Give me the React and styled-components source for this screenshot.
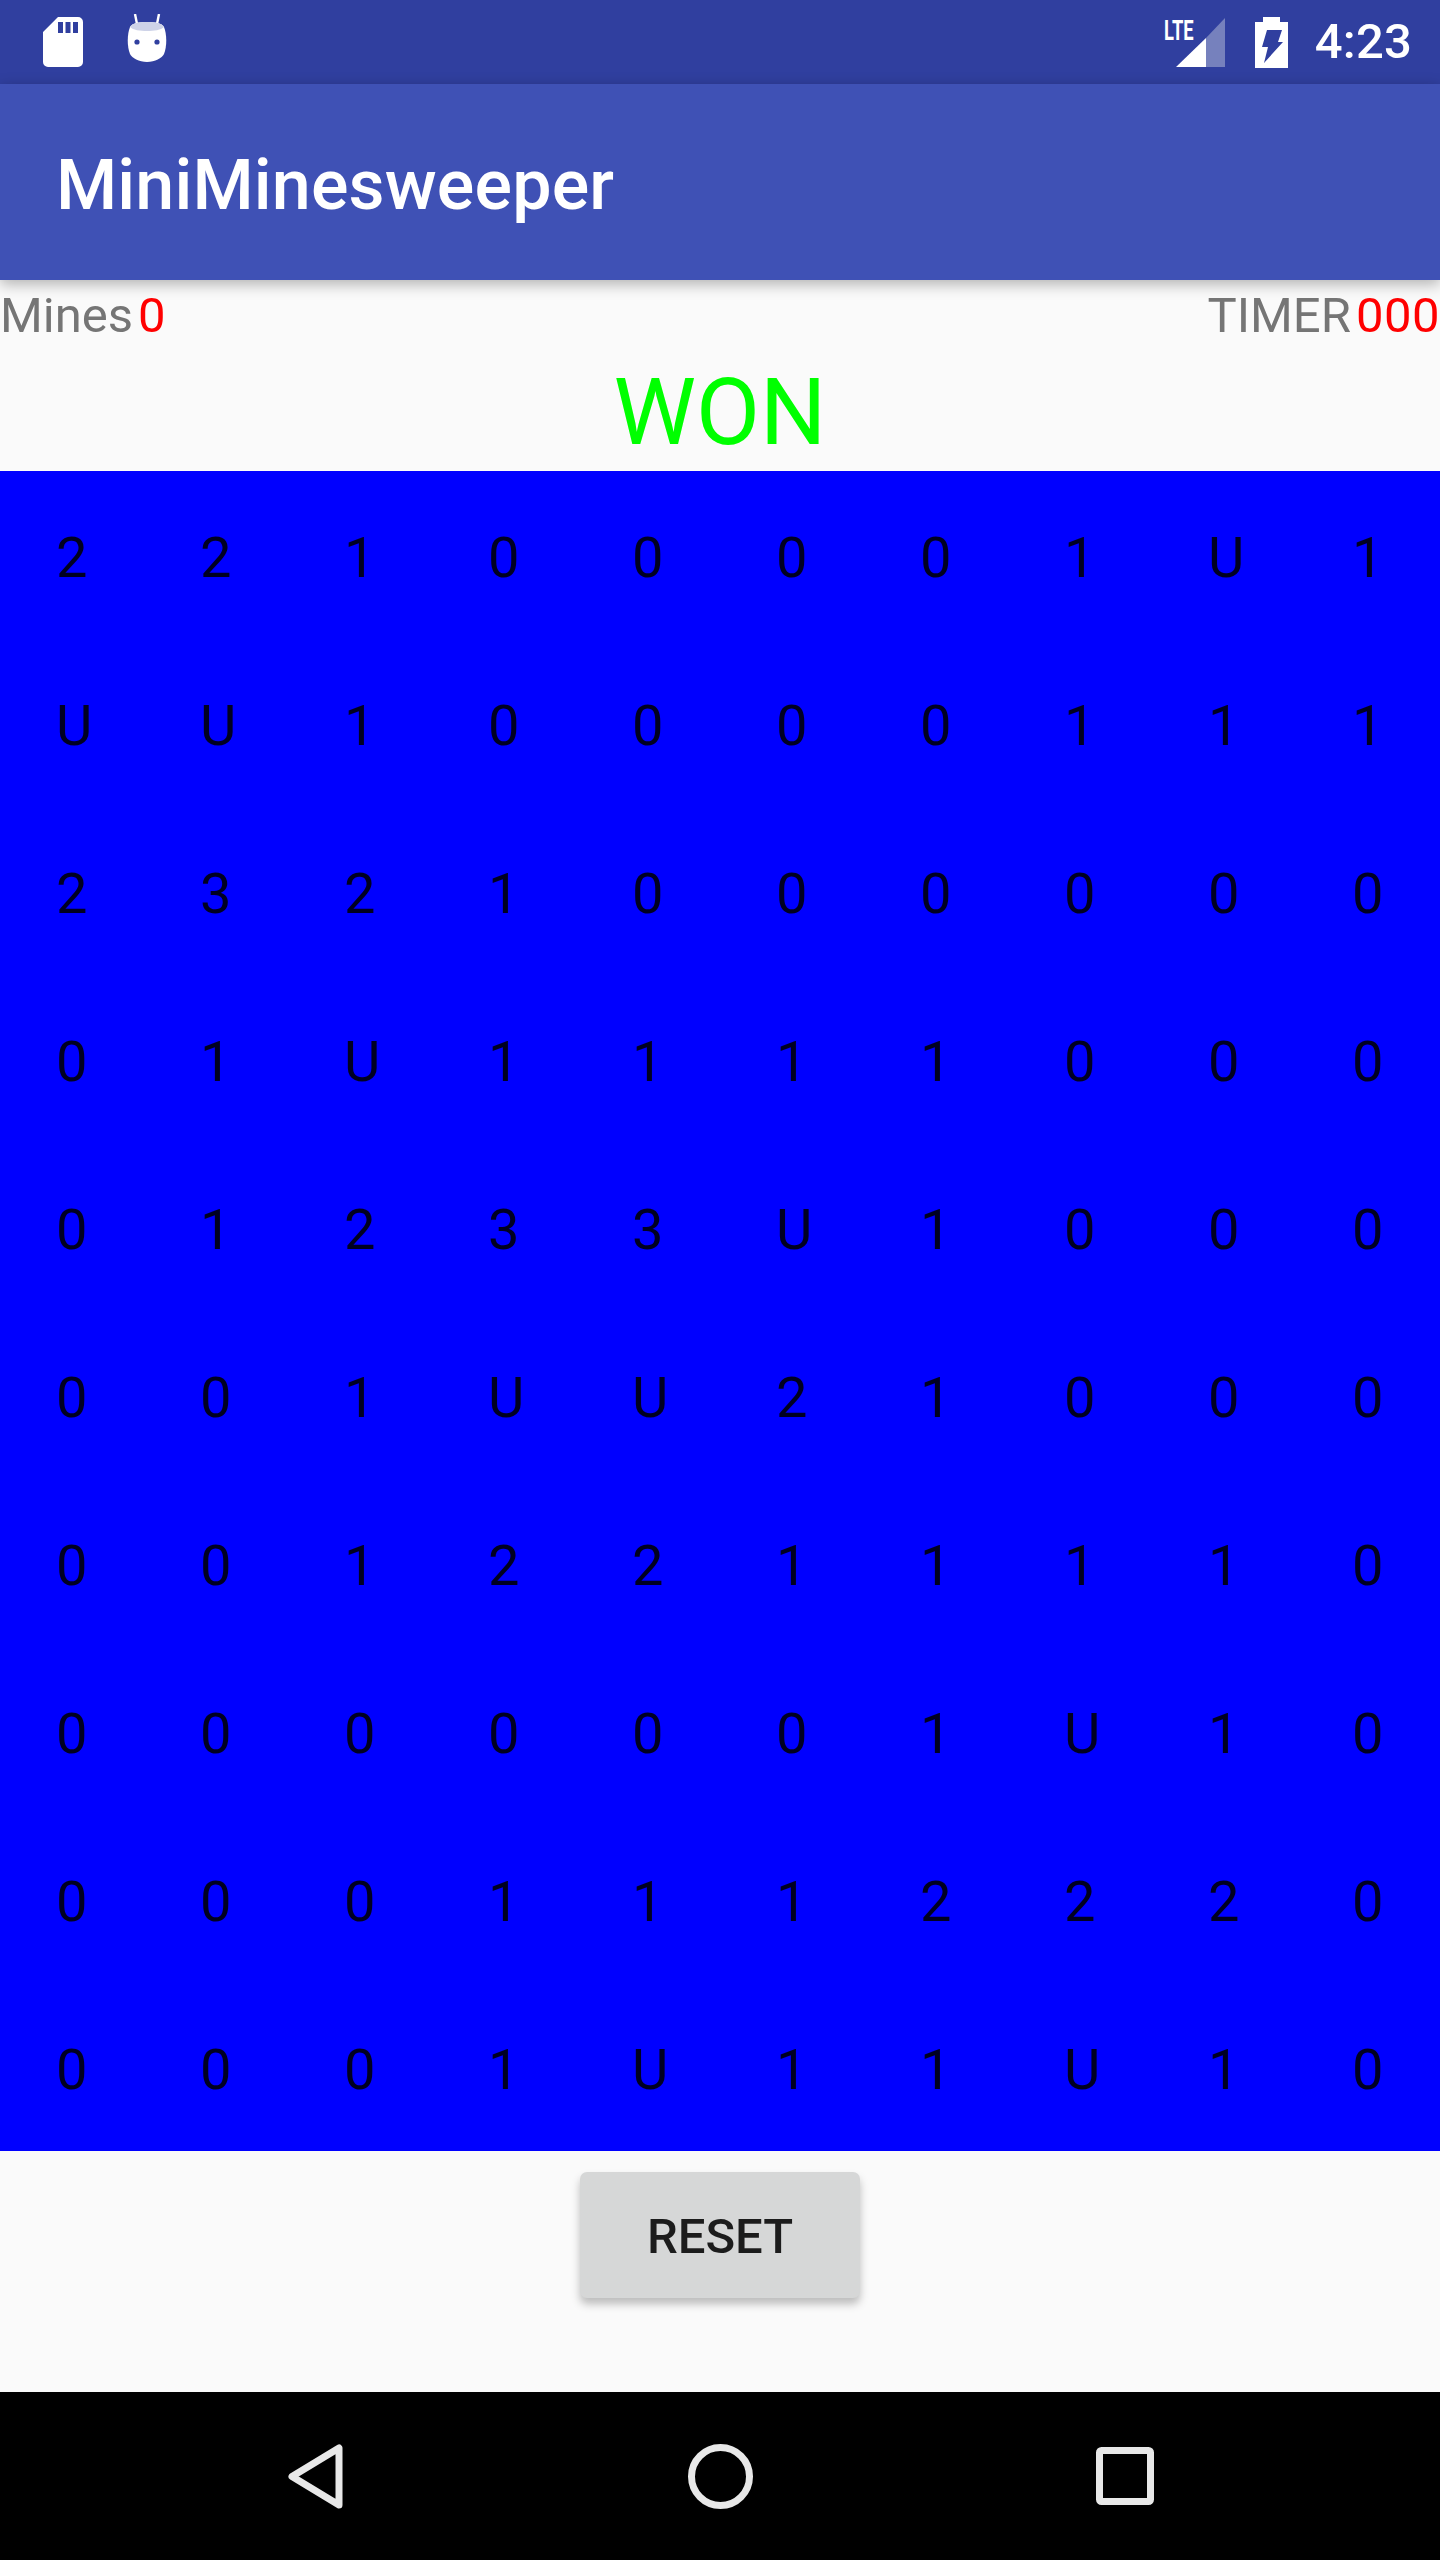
import React from "react";
import styled, { createGlobalStyle } from "styled-components";

const GlobalStyle = createGlobalStyle`
  html, body {
    margin: 0;
    padding: 0;
    background: #fafafa;
  }
  body {
    font-family: Roboto, "Liberation Sans", sans-serif;
  }
`;

const Screen = styled.div`
  width: 1440px;
  height: 2560px;
  display: flex;
  flex-direction: column;
  background: #fafafa;
  overflow: hidden;
`;

const StatusBar = styled.div`
  height: 84px;
  flex: none;
  display: flex;
  align-items: center;
  justify-content: space-between;
  background: #303f9f;
  padding: 0 28px 0 43px;
  box-sizing: border-box;
`;

const StatusGroup = styled.div`
  display: flex;
  align-items: center;
`;

const Clock = styled.span`
  color: #fff;
  font-size: 49px;
  font-weight: 500;
  line-height: 84px;
  margin-left: 27px;
  letter-spacing: 0.2px;
`;

const AppBar = styled.header`
  height: 196px;
  flex: none;
  display: flex;
  align-items: center;
  padding-left: 56px;
  background: #3f51b5;
  box-shadow: 0 4px 14px rgba(0, 0, 0, 0.3);
  position: relative;
  z-index: 1;
`;

const Title = styled.h1`
  margin: 0;
  padding-top: 6px;
  color: #fff;
  font-size: 70px;
  font-weight: 500;
  letter-spacing: 0.15px;
`;

const ScoreRow = styled.div`
  height: 66px;
  flex: none;
  padding-top: 4px;
  box-sizing: border-box;
  display: flex;
  justify-content: space-between;
  align-items: center;
  font-size: 49px;
  color: #757575;
`;

const Score = styled.div`
  display: flex;
  gap: 5px;
`;

const Count = styled.span`
  color: #ff0000;
  letter-spacing: 0.5px;
`;

const Result = styled.div`
  height: 125px;
  flex: none;
  padding-top: 8px;
  box-sizing: border-box;
  display: flex;
  align-items: center;
  justify-content: center;
  font-size: 93px;
  color: #00ff00;
`;

const Board = styled.div`
  height: 1680px;
  flex: none;
  display: grid;
  grid-template-columns: repeat(10, 144px);
  grid-auto-rows: 168px;
  background: #0000ff;
`;

const Cell = styled.div`
  display: flex;
  align-items: center;
  padding: 6px 0 0 56px;
  font-size: 56px;
  color: rgba(0, 0, 0, 0.87);
`;

const Footer = styled.div`
  flex: 1;
  display: flex;
  justify-content: center;
  padding-top: 21px;
`;

const ResetButton = styled.button`
  width: 280px;
  height: 126px;
  border: 0;
  border-radius: 7px;
  padding: 3px 0 0;
  background: #d6d7d7;
  color: #1c1c1c;
  font-family: inherit;
  font-size: 49px;
  font-weight: 500;
  box-shadow: 0 6px 8px rgba(0, 0, 0, 0.25);
`;

const NavBar = styled.nav`
  height: 168px;
  flex: none;
  display: flex;
  align-items: center;
  justify-content: center;
  background: #000;
`;

const NavSlot = styled.div`
  width: 405px;
  display: flex;
  justify-content: center;
`;

const SignalWrap = styled.div`
  position: relative;
  display: flex;
`;

const LteLabel = styled.span`
  position: absolute;
  left: -12px;
  top: -3px;
  color: #fff;
  font-size: 27px;
  line-height: 32px;
  font-weight: 700;
  transform: scaleX(0.68);
  transform-origin: left center;
`;

const BatteryWrap = styled.div`
  display: flex;
  margin-left: 30px;
`;

const MarshmallowWrap = styled.div`
  display: flex;
  margin-left: 44px;
`;

const board = [
  "2210000" + "1U1",
  "UU10000111",
  "2321000000",
  "01U1111000",
  "01233U1000",
  "001UU21000",
  "0012211110",
  "0000001U10",
  "0001112220",
  "0001U11U10",
];

const SdCard = () => (
  <svg width="40" height="50" viewBox="0 0 40 50">
    <path
      fill="#fff"
      fillRule="evenodd"
      d="M15 0H35a5 5 0 0 1 5 5V45a5 5 0 0 1-5 5H5a5 5 0 0 1-5-5V15Z M15 5V16H20V5Z M22.5 5V16H27.5V5Z M30 5V16H35V5Z"
    />
  </svg>
);

const Marshmallow = () => (
  <svg width="40" height="56" viewBox="0 0 40 56">
    <path d="M8 0 10 10M32 0 30 10" stroke="#fff" strokeWidth="2.4" fill="none" />
    <path fill="#fff" d="M20 8c8 0 15 1 17 5 3 7 3 20 0 27-2 4-9 8-17 8S5 44 3 40C0 33 0 20 3 13c2-4 9-5 17-5Z" />
    <path fill="#ced3e8" d="M20 8c8 0 15 1 17 5-3 3-10 4-17 4S6 16 3 13c2-4 9-5 17-5Z" />
    <circle cx="10" cy="28" r="2.6" fill="#303f9f" />
    <circle cx="30" cy="28" r="2.6" fill="#303f9f" />
  </svg>
);

const Signal = () => (
  <svg width="49" height="49" viewBox="0 0 49 49">
    <path fill="#7681bd" d="M49 0V49H30V20Z" />
    <path fill="#fff" d="M0 49 30 20V49Z" />
  </svg>
);

const Battery = () => (
  <svg width="33" height="51" viewBox="0 0 33 51">
    <path
      fill="#fff"
      fillRule="evenodd"
      d="M8 0H25V5H33V51H0V5H8Z M12 13H27L23 25H28L9 46 13 30H7Z"
    />
  </svg>
);

const BackIcon = () => (
  <svg width="55" height="65" viewBox="0 0 55 65">
    <path d="M51 4V61L4 32.5Z" fill="none" stroke="#e8e8e8" strokeWidth="7" strokeLinejoin="round" />
  </svg>
);

const HomeIcon = () => (
  <svg width="65" height="65" viewBox="0 0 65 65">
    <circle cx="32.5" cy="32.5" r="29" fill="none" stroke="#e8e8e8" strokeWidth="7" />
  </svg>
);

const RecentIcon = () => (
  <svg width="58" height="58" viewBox="0 0 58 58">
    <rect x="3.5" y="3.5" width="51" height="51" rx="2" fill="none" stroke="#e8e8e8" strokeWidth="7" />
  </svg>
);

export default function App() {
  return (
    <Screen>
      <GlobalStyle />
      <StatusBar>
        <StatusGroup>
          <SdCard />
          <MarshmallowWrap>
            <Marshmallow />
          </MarshmallowWrap>
        </StatusGroup>
        <StatusGroup>
          <SignalWrap>
            <LteLabel>LTE</LteLabel>
            <Signal />
          </SignalWrap>
          <BatteryWrap>
            <Battery />
          </BatteryWrap>
          <Clock>4:23</Clock>
        </StatusGroup>
      </StatusBar>
      <AppBar>
        <Title>MiniMinesweeper</Title>
      </AppBar>
      <ScoreRow>
        <Score>
          Mines<Count>0</Count>
        </Score>
        <Score>
          TIMER<Count>000</Count>
        </Score>
      </ScoreRow>
      <Result>WON</Result>
      <Board>
        {board.flatMap((row, r) =>
          row.split("").map((v, c) => <Cell key={`${r}-${c}`}>{v}</Cell>)
        )}
      </Board>
      <Footer>
        <ResetButton>RESET</ResetButton>
      </Footer>
      <NavBar>
        <NavSlot>
          <BackIcon />
        </NavSlot>
        <NavSlot>
          <HomeIcon />
        </NavSlot>
        <NavSlot>
          <RecentIcon />
        </NavSlot>
      </NavBar>
    </Screen>
  );
}
